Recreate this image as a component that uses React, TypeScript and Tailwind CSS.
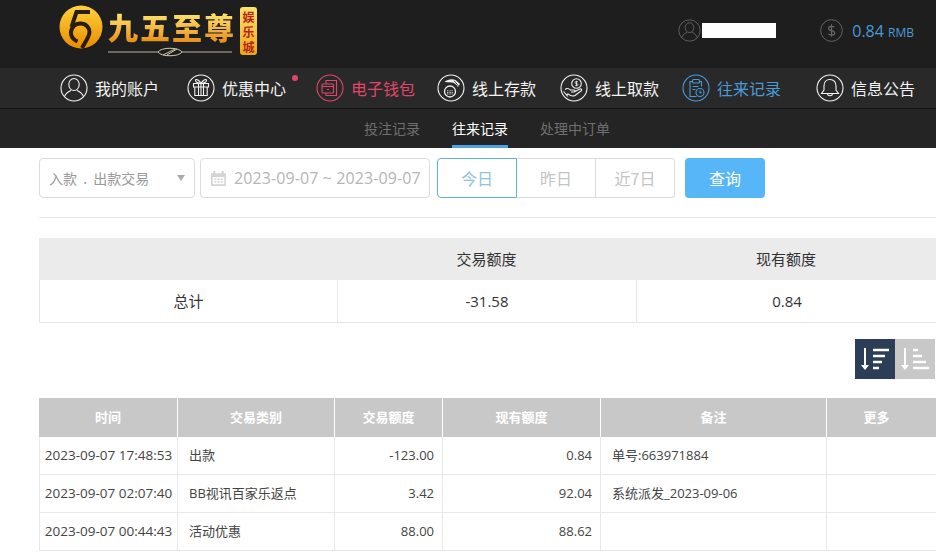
const CJK = '"Noto Sans CJK SC", "Liberation Sans", sans-serif'
const LATIN = '"Open Sans", "Noto Sans CJK SC", sans-serif'

function Ring({ children, className = '' }: { children: React.ReactNode; className?: string }) {
  return (
    <svg viewBox="0 0 28 28" fill="none" stroke="currentColor" strokeWidth="1.100" className={`h-7 w-7 shrink-0 ${className}`}>
      <circle cx="14" cy="14" r="13" />
      {children}
    </svg>
  )
}

const UserIcon = (
  <>
    <ellipse cx="14" cy="10.500" rx="5.200" ry="6" />
    <path d="M4.500 22.500c1.500-4 5-5.500 6.500-6.200M23.500 22.500c-1.500-4-5-5.500-6.500-6.200" />
  </>
)

const navItems = [
  {
    label: '我的账户',
    width: 'w-[127px]',
    color: 'text-[#f2f2f2]',
    icon: UserIcon,
  },
  {
    label: '优惠中心',
    width: 'w-[129px]',
    color: 'text-[#f2f2f2]',
    dot: true,
    icon: (
      <>
        <path d="M6.500 9.500h15v3.500h-15zM7.800 13h12.400v8.500H7.800zM11.500 9.500v12M16.500 9.500v12M14 9.500v12" />
        <path d="M14 9.500c-1.500-3-5-5-5.500-3.500s2 3.500 5.500 3.500c3.500 0 6-2 5.500-3.500s-4 .5-5.500 3.500z" />
      </>
    ),
  },
  {
    label: '电子钱包',
    width: 'w-[121px]',
    color: 'text-[#e0466b]',
    icon: (
      <>
        <path d="M10 10V6.500h10.500v15H10V19" />
        <rect x="6" y="10" width="11.500" height="9" rx="1" />
        <path d="M6 12.500h11.500M11 15.500h2" />
      </>
    ),
  },
  {
    label: '线上存款',
    width: 'w-[123px]',
    color: 'text-[#f2f2f2]',
    icon: (
      <>
        <circle cx="13" cy="17.500" r="5.500" strokeWidth="1.300" />
        <path d="M10 18.500h6M10 16.800h6M10 20h6" strokeWidth=".8" strokeDasharray="1 .6" />
        <path d="M7.500 8c3-3 8-3.500 11-2l4.500 4-2 3c-2-3-4-4.500-6-4.500z" fill="currentColor" stroke="none" />
        <path d="M17 6.500l5 6" stroke="#292929" strokeWidth=".8" />
      </>
    ),
  },
  {
    label: '线上取款',
    width: 'w-[122px]',
    color: 'text-[#f2f2f2]',
    icon: (
      <>
        <circle cx="16.500" cy="9.500" r="4.800" />
        <path d="M16.500 6.800v5.400M18 8c-1-.8-3-.6-3 .6s3 .7 3 1.900-2 1.400-3 .6" strokeWidth=".8" />
        <path d="M5 15.500c2-1.500 4-1 5.500.5h3.500c1.500 0 1.500 2 0 2h-3M14 18l6-3c1.500-.5 2.200 1 1 2l-6 4.500c-2 1-5 0-7-1.500l-2 1" />
        <path d="M3.500 17.500l4.500 5" />
      </>
    ),
  },
  {
    label: '往来记录',
    width: 'w-[134px]',
    color: 'text-[#4b9ad8]',
    icon: (
      <>
        <path d="M17.500 7.500h2v5M10.500 7.500h-2.500v15h6.500" />
        <rect x="10.500" y="5.500" width="7" height="3.500" rx="1" />
        <path d="M10.500 12.500h6M10.500 15.500h3" />
        <circle cx="18" cy="18.500" r="4" />
        <path d="M18 16.500v2.200h1.800" />
      </>
    ),
  },
  {
    label: '信息公告',
    width: 'w-[119px]',
    color: 'text-[#f2f2f2]',
    icon: (
      <>
        <path d="M14 5.500c-4 0-6 3-6 6.500v4l-2.500 3.500h17L20 16v-4c0-3.500-2-6.500-6-6.500z" />
        <path d="M11.500 19.500c0 3 5 3 5 0" />
      </>
    ),
  },
]

const rangeButtons = [
  { label: '今日', className: 'border border-[#5eb3cf] text-[#8fc4da]' },
  { label: '昨日', className: 'border-y border-r border-[#dcdcdc] text-[#c4c4c4]' },
  { label: '近7日', className: 'border-y border-r border-[#dcdcdc] rounded-r text-[#c4c4c4]' },
]

const tableColumns = 'grid grid-cols-[139px_157px_108px_158px_226px_109px]'

const records = [
  { time: '2023-09-07 17:48:53', type: '出款', amount: '-123.00', balance: '0.84', note: '单号:663971884' },
  { time: '2023-09-07 02:07:40', type: 'BB视讯百家乐返点', amount: '3.42', balance: '92.04', note: '系统派发_2023-09-06' },
  { time: '2023-09-07 00:44:43', type: '活动优惠', amount: '88.00', balance: '88.62', note: '' },
]

function Logo() {
  return (
    <div className="flex items-start">
      <svg viewBox="0 0 44 44" className="mt-[-1px] h-[44px] w-[44px] shrink-0" fill="none">
        <defs>
          <linearGradient id="coin" x1="0" y1="0" x2="0" y2="1">
            <stop offset="0" stopColor="#ffd23c" />
            <stop offset="1" stopColor="#e98c00" />
          </linearGradient>
        </defs>
        <circle cx="22" cy="22" r="21.500" fill="url(#coin)" />
        <g stroke="#2a1d08" strokeWidth="4">
          <path d="M31 7H17.500L12.500 22" />
          <path d="M12 28c0-5.500 4-9.500 9.500-9.500 5.500 0 9 4 9 8.500 0 5-5 11-7.500 16" />
          <path d="M12 28c0 4 3 7 6.500 8.500" />
        </g>
      </svg>
      <div className="ml-[5px] flex w-[128px] flex-col">
        <div
          className="mt-[2px] h-[36px] bg-gradient-to-b from-[#fff27a] to-[#e58a00] bg-clip-text text-[30px] leading-[36px] font-black tracking-[2px] whitespace-nowrap text-transparent"
          style={{ fontFamily: '"Noto Sans CJK SC", serif' }}
        >
          九五至尊
        </div>
        <svg viewBox="0 0 124 12" className="mt-[2px] h-[12px] w-[124px]" fill="none" stroke="#e8dcb8">
          <path d="M0 6h50M74 6h50" strokeWidth="0.800" />
          <path d="M50 6c3-5 21-5 24 0c-3 5-21 5-24 0zM55 9l12-6M59 9l10-6" strokeWidth="0.900" />
        </svg>
      </div>
      <div
        className="mt-[1px] ml-[4px] flex h-[48px] w-[17px] flex-col items-center justify-center rounded-[3px] bg-gradient-to-b from-[#ffe36a] to-[#f0a510] text-[12px] leading-[15px] font-bold text-[#b3261a]"
        style={{ fontFamily: CJK }}
      >
        <span>娱</span>
        <span>乐</span>
        <span>城</span>
      </div>
    </div>
  )
}

function SortIcon({ descending = false }: { descending?: boolean }) {
  const bars = descending
    ? ['M14 5h16', 'M14 11h12', 'M14 17h9', 'M14 23h6']
    : ['M14 5h5', 'M14 11h9', 'M14 17h13', 'M14 23h16']
  return (
    <svg viewBox="0 0 32 28" className="h-[28px] w-[32px]" fill="none" stroke="white" strokeWidth="2.500">
      <path d="M6 3v19" strokeWidth="2" />
      <path d="M2 20h8l-4 5z" fill="white" stroke="none" />
      {bars.map((d) => (
        <path key={d} d={d} />
      ))}
    </svg>
  )
}

export default function App() {
  return (
    <div className="min-h-[560px] w-[936px] overflow-hidden bg-white" style={{ fontFamily: CJK }}>
      <header className="flex h-[68px] items-start bg-[#1e1e1e] pt-[6px] pl-[59px]">
        <Logo />
        <div className="ml-auto flex items-center pt-[13px] pr-[22px]">
          <Ring className="h-[23px] w-[23px] text-[#666]">{UserIcon}</Ring>
          <div className="ml-[1px] h-[15px] w-[74px] bg-white" />
          <svg viewBox="0 0 24 24" fill="none" stroke="#666" strokeWidth="1" className="ml-[44px] h-[23px] w-[23px]">
            <circle cx="12" cy="12" r="11.300" />
            <path d="M12 5.500v13M15 8.500c-1.200-1.200-6-1.500-6 1.300 0 3.200 6.300 1.600 6.300 4.700 0 2.800-5 2.600-6.500 1" strokeWidth="1.300" />
          </svg>
          <span className="ml-[9px] text-[16px] leading-none text-[#4b9ad8]" style={{ fontFamily: LATIN }}>
            0.84 <span className="text-[12px]">RMB</span>
          </span>
        </div>
      </header>

      <nav className="flex h-[41px] items-center border-b border-[#141414] bg-[#292929] pl-[60px]">
        {navItems.map((item) => (
          <div key={item.label} className={`relative flex items-center ${item.width} ${item.color}`}>
            <Ring>{item.icon}</Ring>
            <span className="ml-[7px] text-[16px] whitespace-nowrap">{item.label}</span>
            {item.dot && <span className="absolute top-[1px] left-[105px] h-[6px] w-[6px] rounded-full bg-[#e0466b]" />}
          </div>
        ))}
      </nav>

      <div className="flex h-[39px] justify-center bg-[#242424] pl-[38px] text-[14px]">
        <div className="flex gap-[32px]">
          <span className="pt-[9px] text-[#6f6f6f]">投注记录</span>
          <span className="h-[39px] border-b-[3px] border-[#4fa3e3] pt-[9px] text-white">往来记录</span>
          <span className="pt-[9px] text-[#6f6f6f]">处理中订单</span>
        </div>
      </div>

      <main className="pl-[39px]">
        <div className="flex items-center pt-[10px]">
          <div className="flex h-[40px] w-[156px] items-center justify-between rounded border border-[#dcdcdc] pr-[9px] pl-[9px] text-[14px] text-[#999]">
            <span className="[word-spacing:3px]">入款 . 出款交易</span>
            <span className="h-0 w-0 border-x-[4px] border-t-[6px] border-x-transparent border-t-[#aaa]" />
          </div>
          <div className="ml-[5px] flex h-[40px] w-[230px] items-center rounded border border-[#dcdcdc] pl-[9px]">
            <svg viewBox="0 0 16 16" className="h-[17px] w-[17px] shrink-0" fill="#d4d4d4">
              <path d="M1 3h2V1h2v2h6V1h2v2h2v12H1zM2.500 6.500v7h11v-7z" />
              <path d="M4 8h2v1.500H4zM7 8h2v1.500H7zM10 8h2v1.500h-2zM4 10.500h2V12H4zM7 10.500h2V12H7zM10 10.500h2V12h-2z" />
            </svg>
            <span className="ml-[7px] text-[16px] tracking-[.1px] whitespace-nowrap text-[#b5b5b5]" style={{ fontFamily: LATIN }}>
              2023-09-07 ~ 2023-09-07
            </span>
          </div>
          <div className="ml-[7px] flex h-[40px] text-[16px]">
            {rangeButtons.map((btn, i) => (
              <div
                key={btn.label}
                className={`flex items-center justify-center ${i === 0 ? 'w-[80px] rounded-l' : 'w-[79px]'} ${btn.className}`}
              >
                {btn.label}
              </div>
            ))}
          </div>
          <div className="ml-[10px] flex h-[40px] w-[80px] items-center justify-center rounded bg-[#56b6f7] text-[16px] text-white">
            查询
          </div>
        </div>

        <div className="mt-[19px] h-px bg-[#e8e8e8]" />

        <div className="mt-[20px] border-b border-[#e6e6e6] text-[15px] text-[#333]" style={{ fontFamily: LATIN }}>
          <div className="grid h-[42px] grid-cols-[298px_299px_300px] items-center bg-[#ebebeb] text-center">
            <span />
            <span>交易额度</span>
            <span>现有额度</span>
          </div>
          <div className="grid h-[42px] grid-cols-[298px_299px_300px] border-l border-[#e6e6e6] text-center">
            <span className="flex items-center justify-center border-r border-[#e6e6e6]">总计</span>
            <span className="flex items-center justify-center border-r border-[#e6e6e6]">-31.58</span>
            <span className="flex items-center justify-center">0.84</span>
          </div>
        </div>

        <div className="mt-[16px] flex justify-end pr-px">
          <div className="flex h-[40px] w-[40px] items-center justify-center bg-[#2c3e57]">
            <SortIcon descending />
          </div>
          <div className="flex h-[40px] w-[40px] items-center justify-center bg-[#c8c8c8]">
            <SortIcon />
          </div>
        </div>

        <div className="mt-[19px] text-[13px] text-[#444]" style={{ fontFamily: LATIN }}>
          <div className={`${tableColumns} h-[39px] bg-[#c8c8c8] text-center font-bold text-white`}>
            {['时间', '交易类别', '交易额度', '现有额度', '备注', '更多'].map((h, i) => (
              <span key={h} className={`flex items-center justify-center ${i < 5 ? 'border-r border-white' : 'pr-[10px]'}`}>
                {h}
              </span>
            ))}
          </div>
          {records.map((r) => (
            <div key={r.time} className={`${tableColumns} h-[38px] border-b border-[#e8e8e8]`}>
              <span className="flex items-center justify-center border-x border-[#e8e8e8] text-[13.500px] whitespace-nowrap">{r.time}</span>
              <span className="flex items-center border-r border-[#e8e8e8] pl-[11px] whitespace-nowrap">{r.type}</span>
              <span className="flex items-center justify-end border-r border-[#e8e8e8] pr-[8px]">{r.amount}</span>
              <span className="flex items-center justify-end border-r border-[#e8e8e8] pr-[8px]">{r.balance}</span>
              <span className="flex items-center border-r border-[#e8e8e8] pl-[11px]">{r.note}</span>
              <span />
            </div>
          ))}
        </div>
      </main>
    </div>
  )
}
